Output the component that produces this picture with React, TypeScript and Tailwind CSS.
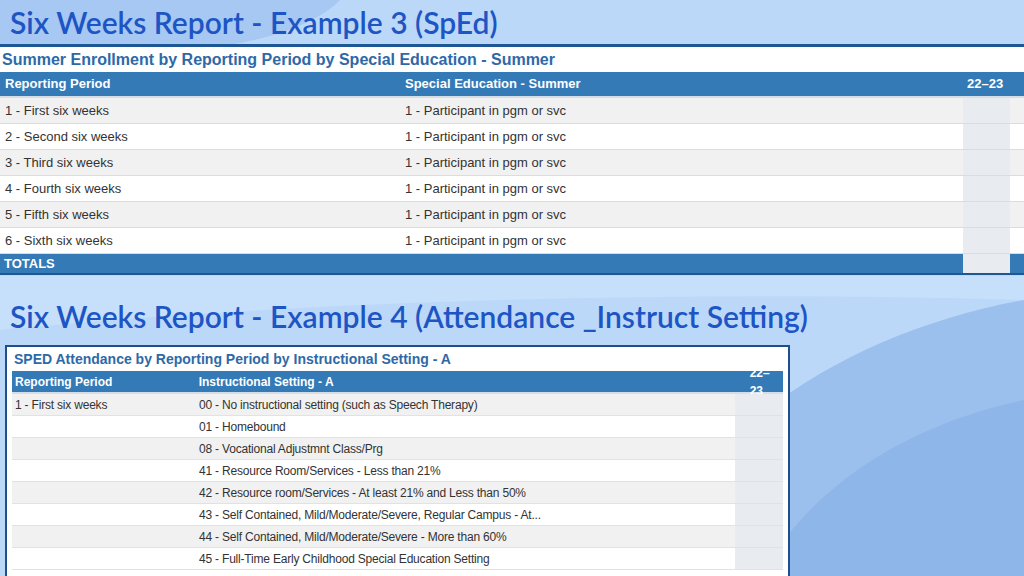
export default function App() {
  const top = ["1 - First six weeks","2 - Second six weeks","3 - Third six weeks","4 - Fourth six weeks","5 - Fifth six weeks","6 - Sixth six weeks"];
  const bot = ["00 - No instructional setting (such as Speech Therapy)","01 - Homebound","08 - Vocational Adjustmnt Class/Prg","41 - Resource Room/Services - Less than 21%","42 - Resource room/Services - At least 21% and Less than 50%","43 - Self Contained, Mild/Moderate/Severe, Regular Campus - At...","44 - Self Contained, Mild/Moderate/Severe - More than 60%","45 - Full-Time Early Childhood Special Education Setting"];
  return (
    <div className="relative w-[1024px] h-[576px] overflow-hidden bg-[#bcd8f8]" style={{ fontFamily: "'Liberation Sans', Arial, sans-serif" }}>
      <svg className="absolute inset-0" width="1024" height="576" viewBox="0 0 1024 576">
        <path d="M0 0 H340 C300 40 200 60 0 60 Z" fill="#a6c8f2" />
        <path d="M640 576 C700 420 860 330 1024 300 V576 Z" fill="#9cc0ee" />
        <path d="M760 576 C820 470 930 420 1024 400 V576 Z" fill="#8fb6e8" />
        <path d="M0 276 H1024 V300 C700 290 300 300 0 330 Z" fill="#c6dffb" />
      </svg>
      <div className="relative flex flex-col">
        <div className="h-[44px] pl-[10px] flex items-center text-[30px] font-semibold text-[#1d55c4]" style={{ fontFamily: "Lato, sans-serif" }}>Six Weeks Report - Example 3 (SpEd)</div>
        <div className="h-[3px] bg-[#1d5796]" />
        <div className="bg-white">
          <div className="h-[25px] pl-[2px] flex items-center text-[16px] font-bold text-[#2e69a7]">Summer Enrollment by Reporting Period by Special Education - Summer</div>
          <div className="h-[26px] flex items-center bg-[#337ab7] text-white font-bold text-[13px] border-b-2 border-[#d5dde6]">
            <div className="w-[405px] pl-[5px]">Reporting Period</div>
            <div className="w-[558px]">Special Education - Summer</div>
            <div className="pl-[4px]">22–23</div>
          </div>
          {top.map((t, i) => (
            <div key={t} className={`h-[26px] flex items-center text-[13px] text-[#333] border-b border-[#dcdcdc] ${i % 2 === 0 ? "bg-[#f1f1f1]" : "bg-white"}`}>
              <div className="w-[405px] pl-[5px]">{t}</div>
              <div className="w-[558px]">1 - Participant in pgm or svc</div>
              <div className="w-[47px] self-stretch bg-[#e8ebef]" />
            </div>
          ))}
          <div className="h-[19px] flex items-center bg-[#337ab7] text-white font-bold text-[13px]">
            <div className="w-[963px] pl-[4px]">TOTALS</div>
            <div className="w-[47px] self-stretch bg-[#e8ebef]" />
          </div>
          <div className="h-[2px] bg-[#1d5796]" />
        </div>
        <div className="h-[70px] pl-[10px] pt-[26px] text-[30px] leading-[30px] font-semibold text-[#1d55c4]" style={{ fontFamily: "Lato, sans-serif" }}>Six Weeks Report - Example 4 (Attendance _Instruct Setting)</div>
        <div className="ml-[5px] w-[785px] h-[240px] border-2 border-[#1f4f8a] bg-white px-[5px]">
          <div className="h-[24px] flex items-center pl-[2px] text-[14px] font-bold text-[#2e69a7]">SPED Attendance by Reporting Period by Instructional Setting - A</div>
          <div className="h-[23px] flex items-center bg-[#337ab7] text-white font-bold text-[12px] border-b-2 border-[#d5dde6]">
            <div className="w-[187px] pl-[3px]">Reporting Period</div>
            <div className="w-[536px]">Instructional Setting - A</div>
            <div className="pl-[16px]">22–23</div>
          </div>
          {bot.map((t, i) => (
            <div key={t} className={`h-[22px] flex items-center text-[12px] text-[#333] tracking-[-0.2px] border-b border-[#e2e2e2] ${i % 2 === 0 ? "bg-[#f1f1f1]" : "bg-white"}`}>
              <div className="w-[187px] pl-[3px]">{i === 0 ? "1 - First six weeks" : ""}</div>
              <div className="w-[536px]">{t}</div>
              <div className="w-[48px] self-stretch bg-[#e8ebef]" />
            </div>
          ))}
        </div>
      </div>
    </div>
  );
}
